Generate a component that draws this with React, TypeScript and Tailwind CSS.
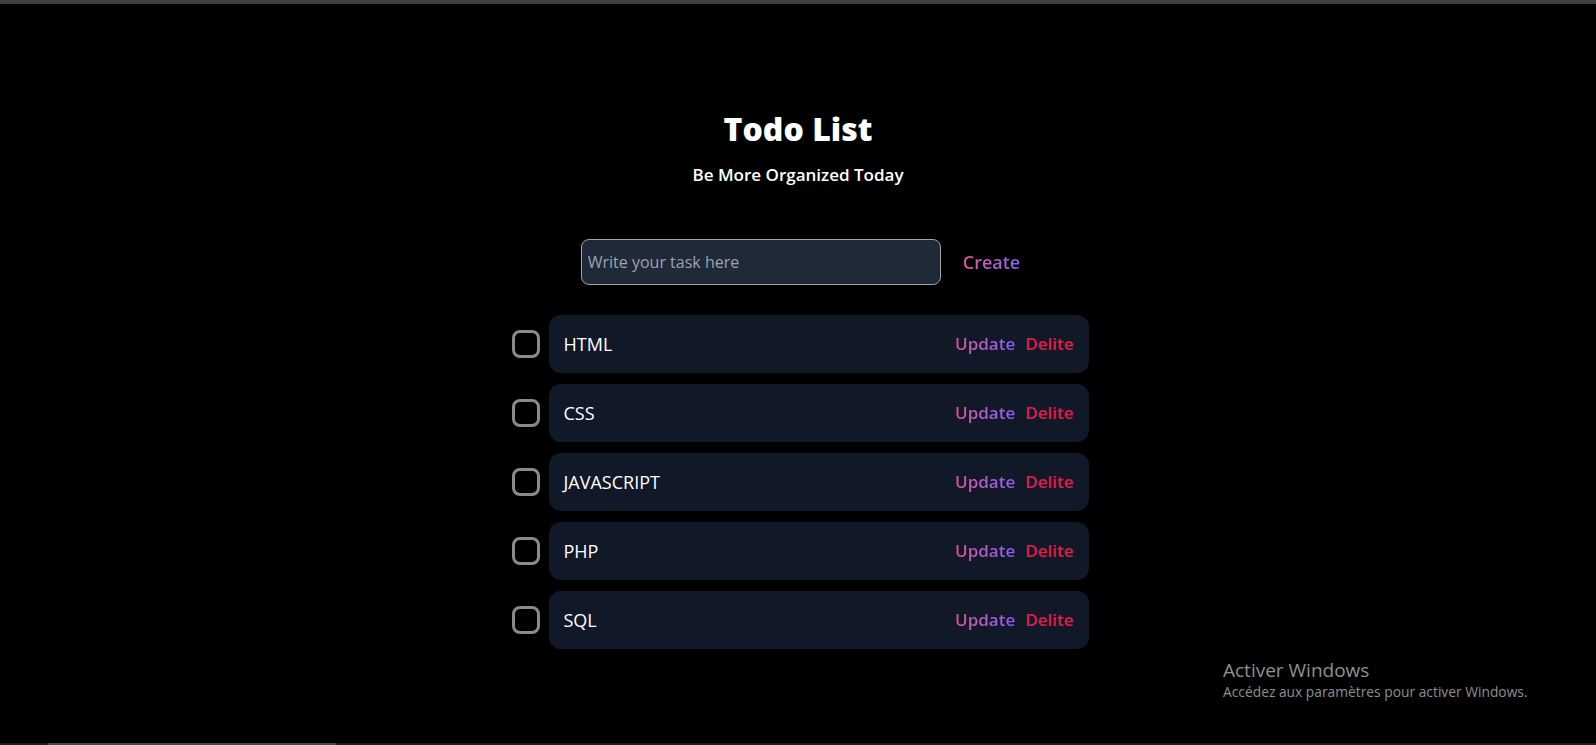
import { useState } from "react";

const initialTasks = ["HTML", "CSS", "JAVASCRIPT", "PHP", "SQL"];

export default function App() {
  const [tasks] = useState(initialTasks);

  return (
    <div
      className="relative h-[745px] w-full overflow-hidden bg-black text-white"
      style={{ fontFamily: '"Open Sans", "Noto Sans", sans-serif' }}
    >
      <div className="h-[4px] w-full bg-[#3f3f3f]" />

      <main className="flex flex-col items-center pt-[107px]">
        <h1 className="text-[32px] font-extrabold leading-[36px]">Todo List</h1>
        <p className="mt-[18px] text-[17px] font-semibold leading-[20px]">Be More Organized Today</p>

        <div className="mt-[54px] flex items-center gap-[22px] pl-[5px]">
          <input
            type="text"
            placeholder="Write your task here"
            className="h-[46px] w-[360px] rounded-lg border border-[#a3a3a3] bg-[#1f2937] px-[6px] text-[16px] text-white placeholder:text-[#9ca3af] outline-none"
          />
          <button className="bg-linear-to-r from-[#e1519b] to-[#8b5cf6] bg-clip-text text-[18px] font-semibold text-transparent">
            Create
          </button>
        </div>

        <ul className="mt-[30px] flex flex-col gap-[11px] pl-[4px]">
          {tasks.map((task) => (
            <li key={task} className="flex items-center gap-[9px]">
              <span className="h-[28px] w-[28px] rounded-lg border-[3px] border-[#8a8a8a]" />
              <div className="flex h-[58px] w-[540px] items-center justify-between rounded-xl bg-[#111827] pl-[15px] pr-[15px]">
                <span className="text-[18px]">{task}</span>
                <div className="flex items-center gap-[10px] text-[17px] font-semibold">
                  <button className="bg-linear-to-r from-[#d9509a] to-[#8b5cf6] bg-clip-text text-transparent">
                    Update
                  </button>
                  <button className="text-[#e11d48]">Delite</button>
                </div>
              </div>
            </li>
          ))}
        </ul>
      </main>

      <div className="absolute left-[1223px] top-[657px] text-[#8f8f8f]">
        <div className="text-[19px] leading-[26px]">Activer Windows</div>
        <div className="text-[13.8px] leading-[18px]">Accédez aux paramètres pour activer Windows.</div>
      </div>

      <div className="absolute bottom-0 left-0 flex h-[2px] w-full bg-[#1c1c1c]">
        <div className="ml-[48px] w-[288px] bg-[#4a4a4a]" />
      </div>
    </div>
  );
}
